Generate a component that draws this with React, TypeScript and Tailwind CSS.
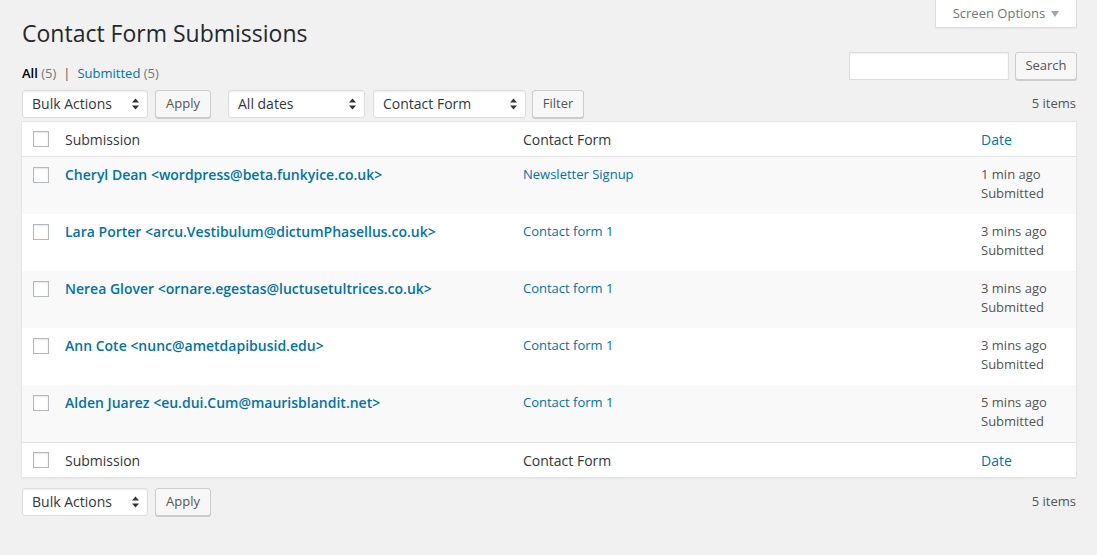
const rows = [
  { name: 'Cheryl Dean <wordpress@beta.funkyice.co.uk>', form: 'Newsletter Signup', date: '1 min ago' },
  { name: 'Lara Porter <arcu.Vestibulum@dictumPhasellus.co.uk>', form: 'Contact form 1', date: '3 mins ago' },
  { name: 'Nerea Glover <ornare.egestas@luctusetultrices.co.uk>', form: 'Contact form 1', date: '3 mins ago' },
  { name: 'Ann Cote <nunc@ametdapibusid.edu>', form: 'Contact form 1', date: '3 mins ago' },
  { name: 'Alden Juarez <eu.dui.Cum@maurisblandit.net>', form: 'Contact form 1', date: '5 mins ago' },
]

function Checkbox() {
  return <span className="block w-4 h-4 bg-white border border-[#b4b9be] shadow-[inset_0_1px_2px_rgba(0,0,0,0.1)]" />
}

function SelectBox({ label, width }: { label: string; width: string }) {
  return (
    <div className={`${width} h-[28px] flex items-center justify-between pl-[9px] pr-[8px] pb-px bg-white border border-[#ddd] rounded-[3px] shadow-[inset_0_1px_2px_rgba(0,0,0,0.07)] text-[14px] text-[#32373c]`}>
      <span>{label}</span>
      <svg width="7" height="12" viewBox="0 0 7 12" className="text-[#333]">
        <path d="M3.5 0.5 L7 4.5 L0 4.5 Z" fill="currentColor" />
        <path d="M3.5 11.5 L7 7.5 L0 7.5 Z" fill="currentColor" />
      </svg>
    </div>
  )
}

function Button({ label, width }: { label: string; width: string }) {
  return (
    <button className={`${width} h-[28px] flex items-center justify-center pb-px bg-[#f7f7f7] border border-[#ccc] rounded-[3px] shadow-[0_1px_0_#ccc] text-[13px] text-[#555]`}>
      {label}
    </button>
  )
}

function Tablenav({ filters }: { filters?: boolean }) {
  return (
    <div className="flex items-center justify-between h-[28px] pl-px">
      <div className="flex items-center">
        <SelectBox label="Bulk Actions" width="w-[126px]" />
        <div className="ml-[7px]"><Button label="Apply" width="w-[56px]" /></div>
        {filters && (
          <>
            <div className="ml-[17px]"><SelectBox label="All dates" width="w-[137px]" /></div>
            <div className="ml-[8px]"><SelectBox label="Contact Form" width="w-[153px]" /></div>
            <div className="ml-[6px]"><Button label="Filter" width="w-[52px]" /></div>
          </>
        )}
      </div>
      <span className="text-[13px] text-[#555] pr-px">5 items</span>
    </div>
  )
}

function HeadRow({ top }: { top?: boolean }) {
  return (
    <div className={`grid grid-cols-[33px_458px_458px_1fr] h-[35px] items-center bg-white text-[14px] text-[#32373c] ${top ? 'border-b' : 'border-t'} border-[#e1e1e1]`}>
      <div className="pl-[11px]"><Checkbox /></div>
      <div className="pl-[10px]">Submission</div>
      <div className="pl-[10px]">Contact Form</div>
      <div className="pl-[10px] text-[#0073aa]">Date</div>
    </div>
  )
}

export default function App() {
  return (
    <div className="min-h-[555px] bg-[#f1f1f1] pl-[21px] pr-[20px] font-['Open_Sans',sans-serif] text-[13px] text-[#444]">
      <div className="flex items-start justify-between">
        <h1 className="pt-[19px] pl-px text-[23px] leading-[29px] text-[#23282d]">Contact Form Submissions</h1>
        <button className="w-[142px] h-[28px] flex items-center justify-center gap-[6px] bg-white border border-t-0 border-[#ddd] shadow-[0_1px_1px_rgba(0,0,0,0.04)] text-[13px] text-[#72777c]">
          Screen Options
          <svg width="8" height="6" viewBox="0 0 8 6"><path d="M0 0 L8 0 L4 6 Z" fill="#a0a5aa" /></svg>
        </button>
      </div>

      <div className="flex items-start justify-between mt-[4px] h-[34px]">
        <div className="mt-[11px] pl-px leading-[20px] text-[13px]">
          <span className="font-semibold text-black">All</span>
          <span className="text-[#72777c]"> (5)</span>
          <span className="text-[#555] mx-[7px]">|</span>
          <span className="text-[#0073aa]">Submitted</span>
          <span className="text-[#72777c]"> (5)</span>
        </div>
        <div className="flex items-center gap-[6px]">
          <div className="w-[160px] h-[28px] bg-white border border-[#ddd] shadow-[inset_0_1px_2px_rgba(0,0,0,0.07)]" />
          <Button label="Search" width="w-[62px]" />
        </div>
      </div>

      <div className="mt-[4px]">
        <Tablenav filters />
      </div>

      <div className="mt-[3px] bg-white border border-[#e5e5e5] shadow-[0_1px_1px_rgba(0,0,0,0.04)]">
        <HeadRow top />
        {rows.map((r, i) => (
          <div key={i} className={`grid grid-cols-[33px_458px_458px_1fr] h-[57px] items-start ${i % 2 === 0 ? 'bg-[#f9f9f9]' : 'bg-white'}`}>
            <div className="pl-[11px] pt-[10px]"><Checkbox /></div>
            <div className="pl-[10px] pt-[8px] leading-[20px] text-[14px] font-semibold text-[#0073aa] whitespace-nowrap">{r.name}</div>
            <div className="pl-[10px] pt-[7px] leading-[20px] text-[13px] text-[#0073aa]">{r.form}</div>
            <div className="pl-[10px] pt-[7.5px] leading-[19.5px] text-[13px] text-[#555]">
              <div>{r.date}</div>
              <div>Submitted</div>
            </div>
          </div>
        ))}
        <HeadRow />
      </div>

      <div className="mt-[10px]">
        <Tablenav />
      </div>
    </div>
  )
}
